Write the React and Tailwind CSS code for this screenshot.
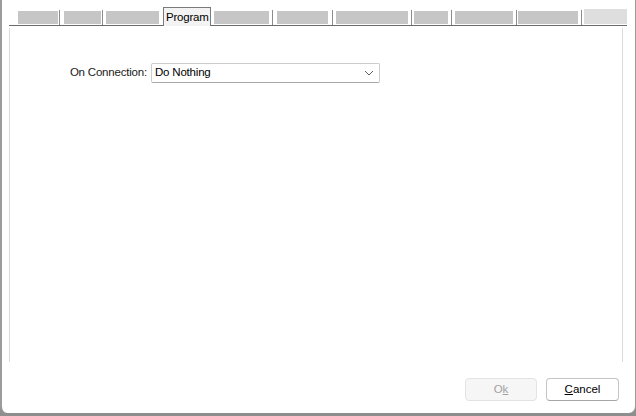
const tabs = [
  { ml: "ml-[9px]", w: "w-[40px]", k: "b" },
  { ml: "ml-[1px]", w: "", k: "s" },
  { ml: "ml-[4px]", w: "w-[37px]", k: "b" },
  { ml: "ml-[1px]", w: "", k: "s" },
  { ml: "ml-[3px]", w: "w-[53px]", k: "b" },
  { ml: "ml-[4px]", w: "", k: "p" },
  { ml: "ml-[3px]", w: "w-[55px]", k: "b" },
  { ml: "ml-[3px]", w: "", k: "s" },
  { ml: "ml-[4px]", w: "w-[51px]", k: "b" },
  { ml: "ml-[4px]", w: "", k: "s" },
  { ml: "ml-[3px]", w: "w-[72px]", k: "b" },
  { ml: "ml-[3px]", w: "", k: "s" },
  { ml: "ml-[2px]", w: "w-[34px]", k: "b" },
  { ml: "ml-[3px]", w: "", k: "s" },
  { ml: "ml-[3px]", w: "w-[58px]", k: "b" },
  { ml: "ml-[3px]", w: "", k: "s" },
  { ml: "ml-[1px]", w: "w-[60px]", k: "b" },
  { ml: "ml-[3px]", w: "", k: "s" },
  { ml: "ml-[2px]", w: "w-[43px]", k: "l" },
];

function Tab({ t }) {
  if (t.k === "s") return <div className={`${t.ml} mt-[10px] h-[15px] w-px bg-[#8c8c8c]`} />;
  if (t.k === "l") return <div className={`${t.ml} ${t.w} mt-[9px] h-[15px] bg-[#dedede]`} />;
  if (t.k === "p")
    return (
      <div className={`${t.ml} relative z-10 mt-[7px] h-[19px] w-[48px] border border-b-0 border-[#7a7a7a] bg-[#f3f3f3] pl-[2px] text-[11.5px] tracking-[-0.2px] leading-[19px] text-black whitespace-nowrap`}>
        Program
      </div>
    );
  return <div className={`${t.ml} ${t.w} mt-[11px] h-[13px] bg-[#c6c6c6]`} />;
}

export default function App() {
  return (
    <div className="w-[636px] h-[416px] bg-[#8e8e8e] overflow-hidden" style={{ fontFamily: '"Liberation Sans", Arial, sans-serif' }}>
      <div className="h-[413px] flex flex-col bg-white border-l-2 border-r border-[#9c9c9c] rounded-b-[7px]">
        {/* tab strip */}
        <div className="ml-[7px] w-[618px] h-[26px] flex items-start border-b border-[#6b6b6b]">
          {tabs.map((t, i) => (
            <Tab key={i} t={t} />
          ))}
        </div>

        {/* page */}
        <div className="ml-[7px] mt-[2px] w-[614px] h-[334px] border-x border-[#dadada]">
          <div className="mt-[35px] flex items-center">
            <span className="w-[140px] pr-[3px] text-right text-[11.5px] tracking-[-0.2px] text-[#1a1a1a] whitespace-nowrap">On Connection:</span>
            <div className="ml-[1px] w-[229px] h-[20px] flex items-center justify-between border border-[#cccccc] border-b-[#a8a8a8] rounded-[2px] pl-[3px] pr-[5px] text-[11.5px] tracking-[-0.2px] text-black">
              <span>Do Nothing</span>
              <svg width="10" height="6" viewBox="0 0 10 6" fill="none">
                <path d="M1 1l4 4 4-4" stroke="#5f5f5f" strokeWidth="1" />
              </svg>
            </div>
          </div>
        </div>

        {/* buttons */}
        <div className="mt-[16px] flex justify-end gap-[9px] pr-[16px]">
          <button className="w-[72px] h-[23px] rounded-[4px] border border-[#e3e3e3] bg-[#f6f6f6] text-[11.5px] text-[#a2a2a2]">
            O<span className="underline">k</span>
          </button>
          <button className="w-[73px] h-[23px] rounded-[4px] border border-[#c4c4c4] border-b-[#a6a6a6] bg-white text-[11.5px] text-black">
            <span className="underline">C</span>ancel
          </button>
        </div>
      </div>
    </div>
  );
}
